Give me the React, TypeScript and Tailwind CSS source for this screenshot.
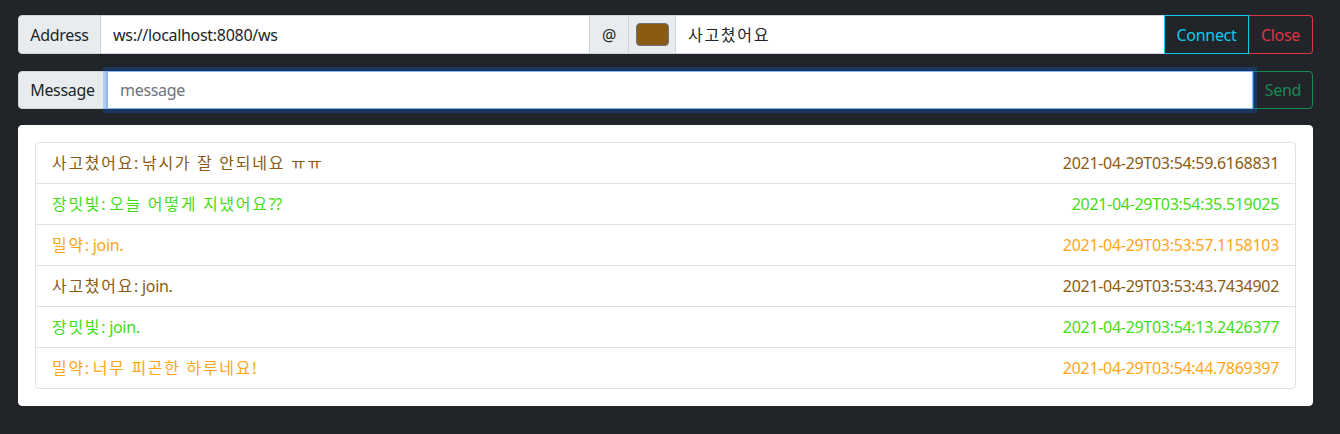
import React from "react";

type Chat = {
	name: string;
	text: string;
	time: string;
	color: string;
};

const chats: Chat[] = [
	{ name: "사고쳤어요", text: "낚시가 잘 안되네요 ㅠㅠ", time: "2021-04-29T03:54:59.6168831", color: "text-[#8b5a13]" },
	{ name: "장밋빛", text: "오늘 어떻게 지냈어요??", time: "2021-04-29T03:54:35.519025", color: "text-[#44dc14]" },
	{ name: "밀약", text: "join.", time: "2021-04-29T03:53:57.1158103", color: "text-[#ffa516]" },
	{ name: "사고쳤어요", text: "join.", time: "2021-04-29T03:53:43.7434902", color: "text-[#8b5a13]" },
	{ name: "장밋빛", text: "join.", time: "2021-04-29T03:54:13.2426377", color: "text-[#44dc14]" },
	{ name: "밀약", text: "너무 피곤한 하루네요!", time: "2021-04-29T03:54:44.7869397", color: "text-[#ffa516]" },
];

const font = {
	fontFamily: '"Noto Sans", "Noto Sans CJK KR", sans-serif',
};

// korean glyphs are a bit wider in the original font, so space them out
const Mixed = ({ value }: { value: string }) => (
	<>
		{value.split(/([\u3131-\u318e\uac00-\ud7a3 ]+)/).map((part, i) =>
			/[\u3131-\u318e\uac00-\ud7a3]/.test(part) ? (
				<span key={i} className="tracking-[1.7px]">
					{part}
				</span>
			) : (
				<React.Fragment key={i}>{part}</React.Fragment>
			),
		)}
	</>
);

const App = () => {
	return (
		<div
			className="min-h-[434px] w-full bg-[#212529] pl-[18px] pt-[15px] text-base tracking-[-0.3px] text-[#212529]"
			style={font}
		>
			<div className="w-[1295px]">
				{/* address row */}
				<div className="flex h-[39px]">
					<span className="flex w-[83px] items-center justify-center rounded-l border border-[#ced4da] bg-[#e9ecef]">
						Address
					</span>
					<input
						className="min-w-0 flex-1 border-y border-[#ced4da] bg-white px-3 tracking-[-0.3px] text-[#212529] outline-none"
						defaultValue="ws://localhost:8080/ws"
						style={font}
					/>
					<span className="flex w-[40px] items-center justify-center border border-[#ced4da] bg-[#e9ecef]">
						@
					</span>
					<span className="flex w-[47px] items-center justify-center border-y border-r border-[#ced4da] bg-[#e9ecef]">
						<span className="h-[23px] w-[33px] rounded border border-[#6c757d] bg-[#8b5a13]" />
					</span>
					<input
						className="min-w-0 flex-1 border-y border-[#ced4da] bg-white px-3 tracking-[1.7px] text-[#212529] outline-none"
						defaultValue="사고쳤어요"
						style={font}
					/>
					<button
						type="button"
						className="w-[85px] border border-[#0dcaf0] text-[#0dcaf0]"
					>
						Connect
					</button>
					<button
						type="button"
						className="w-[64px] rounded-r border border-l-0 border-[#dc3545] text-[#dc3545]"
					>
						Close
					</button>
				</div>

				{/* message row */}
				<div className="mt-[17px] flex h-[38px]">
					<span className="flex w-[89px] items-center justify-center rounded-l border border-[#ced4da] bg-[#e9ecef]">
						Message
					</span>
					<input
						className="relative z-10 min-w-0 flex-1 border border-[#86b7fe] bg-white px-3 tracking-[-0.3px] text-[#212529] shadow-[0_0_0_4px_rgba(13,110,253,0.25)] outline-none placeholder:text-[#6c757d]"
						placeholder="message"
						style={font}
					/>
					<button
						type="button"
						className="w-[60px] rounded-r border border-[#198754] text-[#198754]"
					>
						Send
					</button>
				</div>

				{/* chat log */}
				<div className="mt-4 rounded border border-white bg-white p-4">
					<ul className="rounded border border-[#dee2e6]">
						{chats.map((chat, i) => (
							<li
								key={i}
								className={`flex items-center justify-between px-4 ${chat.color} ${
									i > 0 ? "h-[41px] border-t border-[#dee2e6]" : "h-[40px]"
								}`}
							>
								<span>
									<Mixed value={chat.name} />: <Mixed value={chat.text} />
								</span>
								<span>{chat.time}</span>
							</li>
						))}
					</ul>
				</div>
			</div>
		</div>
	);
};

export default App;
